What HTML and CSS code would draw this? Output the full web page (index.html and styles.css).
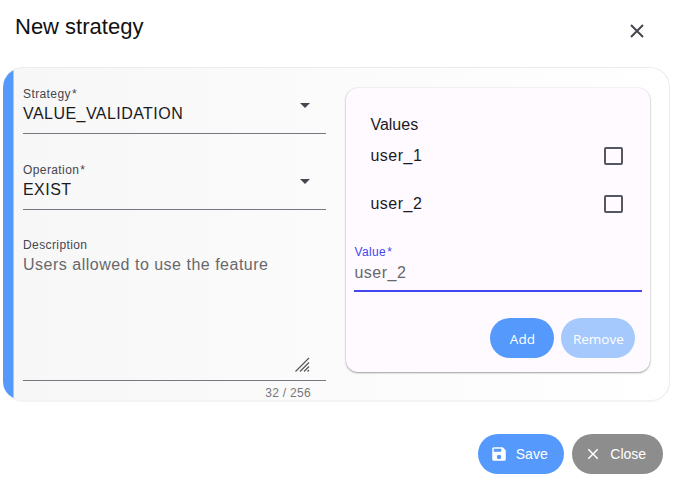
FILE: index.html
```html
<!DOCTYPE html>
<html lang="en">
<head>
<meta charset="utf-8">
<title>New strategy</title>
<link rel="stylesheet" href="styles.css">
</head>
<body>
<main class="dialog">
  <header class="header">
    <h1 class="title">New strategy</h1>
    <svg class="dismiss" viewBox="0 0 14 14"><path d="M1 1 13 13M13 1 1 13"/></svg>
  </header>
  <section class="panel">
    <div class="fields">
      <div class="field">
        <div class="label">Strategy<span class="star">*</span></div>
        <div class="select"><span>VALUE_VALIDATION</span><i class="arrow"></i></div>
      </div>
      <div class="field">
        <div class="label">Operation<span class="star">*</span></div>
        <div class="select"><span>EXIST</span><i class="arrow"></i></div>
      </div>
      <div class="field area">
        <div class="label">Description</div>
        <div class="text">Users allowed to use the feature</div>
        <svg class="grip" viewBox="0 0 15 15"><path d="M.5 14.5 14 1M5 14.5 14 5.5M9 14.5 14 9.5M12.5 14.5 14 13"/></svg>
      </div>
      <div class="counter">32 / 256</div>
    </div>
    <div class="card">
      <h2 class="card-title">Values</h2>
      <div class="option"><span>user_1</span><i class="box"></i></div>
      <div class="option"><span>user_2</span><i class="box"></i></div>
      <div class="field value">
        <div class="label">Value<span class="star">*</span></div>
        <div class="text">user_2</div>
      </div>
      <div class="card-actions">
        <button class="btn add">Add</button>
        <button class="btn remove">Remove</button>
      </div>
    </div>
  </section>
  <footer class="footer">
    <button class="btn save"><svg class="icon" viewBox="0 0 24 24"><path fill="#fff" d="M17 3H5a2 2 0 0 0-2 2v14a2 2 0 0 0 2 2h14a2 2 0 0 0 2-2V7l-4-4zm-5 16a3 3 0 1 1 0-6 3 3 0 0 1 0 6zm3-10H5V5h10v4z"/></svg>Save</button>
    <button class="btn close"><svg class="icon" viewBox="0 0 24 24"><path fill="#fff" d="M19 6.41 17.59 5 12 10.59 6.41 5 5 6.41 10.59 12 5 17.59 6.41 19 12 13.41 17.59 19 19 17.59 13.41 12z"/></svg>Close</button>
  </footer>
</main>
</body>
</html>
```
FILE: styles.css
```css
* { box-sizing: border-box; }
body {
  margin: 0;
  background: #fff;
  color: #1b1b1f;
  font: 16px/24px "Liberation Sans", Arial, sans-serif;
}
.dialog { width: 677px; height: 483px; padding: 0 7px 0 3px; overflow: hidden; }
.header {
  display: flex;
  justify-content: space-between;
  height: 67px;
  padding: 11px 26px 0 12px;
}
.title { margin: 0; color: #111; font-size: 22px; line-height: 32px; font-weight: 400; }
.dismiss { width: 14px; height: 14px; margin-top: 13px; fill: none; stroke: #45464f; stroke-width: 2; }
.panel {
  display: flex;
  gap: 20.4px;
  height: 335px;
  padding: 20px 19px 0 20px;
  border: solid #ececec;
  border-width: 1px 1px 2px 0;
  border-bottom-color: #f3f3f3;
  border-radius: 20px;
  background:
    linear-gradient(#5599fc, #5599fc) 0 0 / 10.5px 100% no-repeat border-box,
    linear-gradient(90deg, #f7f7f7, #fff);
}
.fields { flex: none; width: 303px; margin-top: -5px; }
.field { height: 51px; border-bottom: 1px solid #77777f; margin-bottom: 25px; }
.label { color: #45464f; font-size: 12px; line-height: 22px; letter-spacing: .4px; }
.star { margin-left: 1px; }
.select { display: flex; justify-content: space-between; padding-right: 16px; line-height: 18px; letter-spacing: .45px; }
.arrow { width: 10px; height: 5px; margin-top: -2px; background: #45464f; clip-path: polygon(0 0, 100% 0, 50% 100%); }
.text { color: #68686b; line-height: 20px; letter-spacing: .5px; }
.area { display: flex; flex-direction: column; height: 146px; margin-bottom: 0; padding-bottom: 8px; }
.area .label { line-height: 21px; }
.area .text { line-height: 18px; }
.grip { width: 15px; height: 15px; margin: auto 16px 0 auto; fill: none; stroke: #555; stroke-width: 1.2; }
.counter { padding-right: 15px; text-align: right; color: #77777b; font-size: 12px; line-height: 24px; letter-spacing: .3px; }
.card {
  flex: none;
  width: 303.6px;
  height: 284px;
  padding: 24px 8px 0;
  border-radius: 12px;
  background: #fefaff;
  box-shadow: 0 1px 2px rgba(0, 0, 0, .35), 0 0 2px rgba(0, 0, 0, .12);
}
.card-title { margin: 0 16px; font-size: 16px; line-height: 25px; font-weight: 400; }
.option { display: flex; align-items: center; justify-content: space-between; height: 40px; margin: -1px 0 9px; padding: 0 19px 0 16px; letter-spacing: .5px; }
.option span { line-height: 26px; }
.box { width: 19px; height: 18px; border: 2px solid #55565f; border-radius: 2px; }
.value { height: 50px; margin: 18px 0 0; border-bottom: 2px solid #4447f0; }
.value .label { color: #4447f0; line-height: 21px; }
.value .text { line-height: 19px; }
.card-actions { display: flex; justify-content: flex-end; gap: 7px; margin: 25.5px 6.6px 0 0; }
.btn {
  display: flex;
  align-items: center;
  justify-content: center;
  height: 40px;
  padding: 0;
  border: 0;
  border-radius: 20px;
  color: #fff;
  font: 14px/20px "Liberation Sans", Arial, sans-serif;
}
.add, .remove { padding-top: 2px; font-family: "Open Sans", "Noto Sans", sans-serif; font-size: 13.5px; }
.add { width: 64px; background: #5599fc; }
.remove { width: 74px; background: #a6c9fd; }
.footer { display: flex; justify-content: flex-end; gap: 8px; margin-top: 32px; padding-right: 7.5px; }
.footer .btn { padding-right: 4px; }
.icon { width: 18px; height: 18px; margin-right: 8px; }
.save { width: 86.5px; background: #5599fc; }
.close { width: 90.5px; background: #8d8d8d; }
```
